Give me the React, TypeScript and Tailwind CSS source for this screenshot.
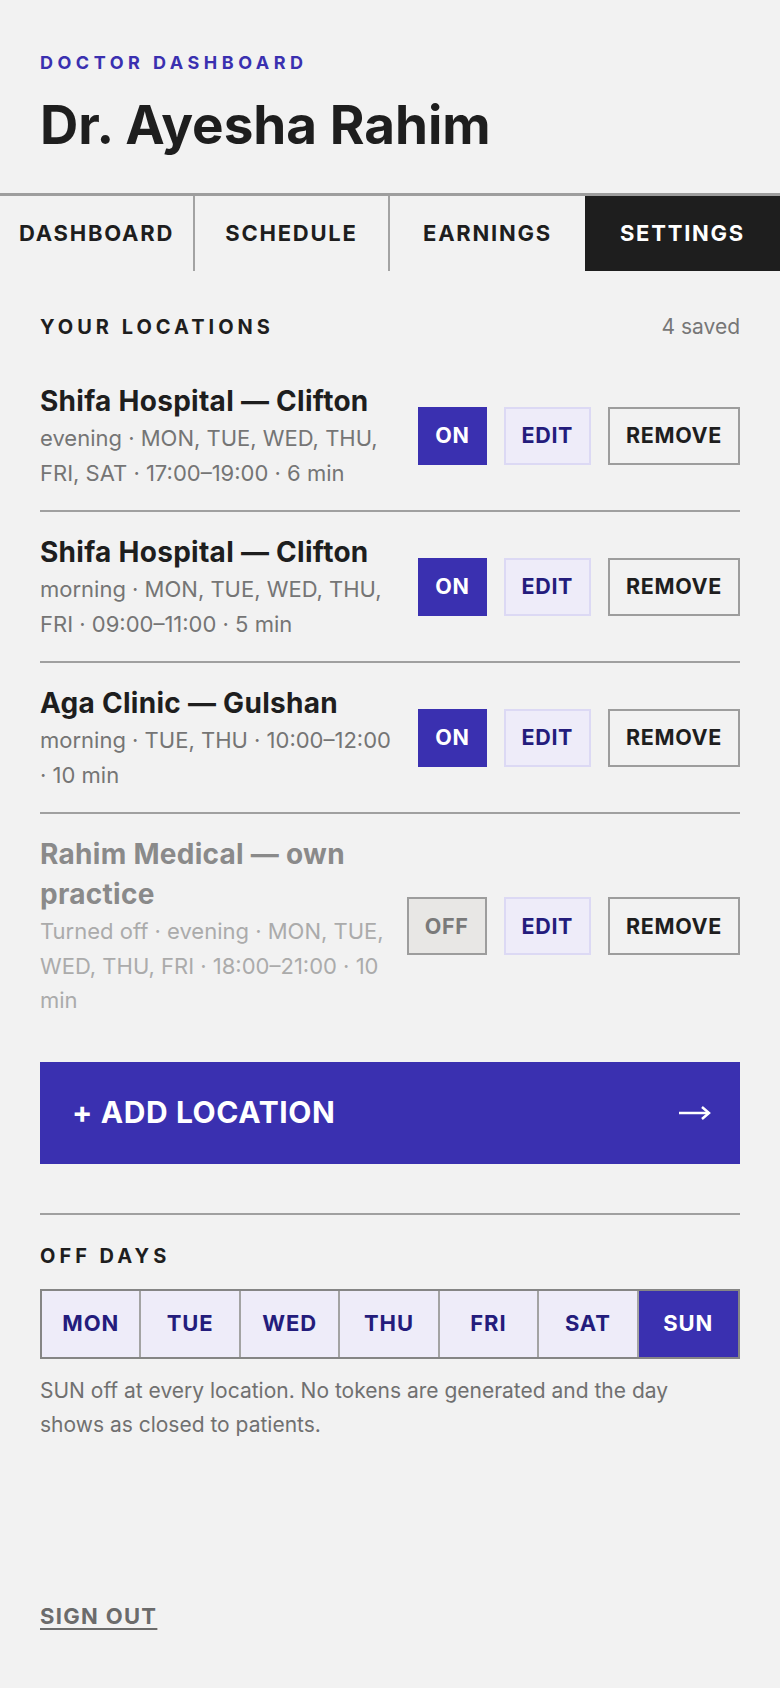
import React, { useState } from 'react';

type Loc = {
  id: number;
  name: string;
  detail: string;
  on: boolean;
};

const LOCATIONS: Loc[] = [
  { id: 1, name: 'Shifa Hospital — Clifton', detail: 'evening · MON, TUE, WED, THU, FRI, SAT · 17:00–19:00 · 6 min', on: true },
  { id: 2, name: 'Shifa Hospital — Clifton', detail: 'morning · MON, TUE, WED, THU, FRI · 09:00–11:00 · 5 min', on: true },
  { id: 3, name: 'Aga Clinic — Gulshan', detail: 'morning · TUE, THU · 10:00–12:00 · 10 min', on: true },
  { id: 4, name: 'Rahim Medical — own practice', detail: 'Turned off · evening · MON, TUE, WED, THU, FRI · 18:00–21:00 · 10 min', on: false },
];

const TABS = ['DASHBOARD', 'SCHEDULE', 'EARNINGS', 'SETTINGS'];
const DAYS = ['MON', 'TUE', 'WED', 'THU', 'FRI', 'SAT', 'SUN'];

export default function App() {
  const [offDays, setOffDays] = useState<string[]>(['SUN']);

  const toggleDay = (d: string) =>
    setOffDays((prev) => (prev.includes(d) ? prev.filter((x) => x !== d) : [...prev, d]));

  return (
    <div
      className="min-h-screen flex flex-col bg-[#f2f2f2] text-[#1e1e1e]"
      style={{ fontFamily: 'Inter, "Liberation Sans", sans-serif' }}
    >
      {/* Header */}
      <header className="px-10 pt-[51px] pb-[40px]">
        <p className="text-[18px] leading-6 font-bold tracking-[0.25em] text-[#3a30b0]">DOCTOR DASHBOARD</p>
        <h1 className="mt-[23px] text-[53px] leading-[55px] font-bold">Dr. Ayesha Rahim</h1>
      </header>

      {/* Tabs */}
      <nav className="grid grid-cols-4 border-t-[3px] border-[#9e9e9e]">
        {TABS.map((t, i) => (
          <div
            key={t}
            className={`h-[75px] flex items-center justify-center text-[22px] font-bold tracking-[0.08em] ${
              t === 'SETTINGS' ? 'bg-[#1e1e1e] text-white' : ''
            } ${i < 2 ? 'border-r-2 border-[#a3a3a3]' : ''}`}
          >
            {t}
          </div>
        ))}
      </nav>

      <main className="px-10">
        {/* Locations */}
        <section className="pt-[44px]">
          <div className="flex items-center justify-between">
            <h2 className="text-[20px] leading-6 font-bold tracking-[0.2em]">YOUR LOCATIONS</h2>
            <span className="text-[21px] leading-6 text-[#777]">4 saved</span>
          </div>

          <div className="mt-[22px]">
            {LOCATIONS.map((loc, i) => (
              <div
                key={loc.id}
                className={`flex items-center gap-5 py-[20px] ${
                  i < LOCATIONS.length - 1 ? 'border-b-2 border-[#a0a0a0]' : ''
                }`}
              >
                <div className="flex-1 min-w-0">
                  <p
                    className={`text-[28px] leading-[40px] font-bold tracking-[0.01em] ${
                      loc.on ? 'text-[#1e1e1e]' : 'text-[#8a8a8a]'
                    }`}
                  >
                    {loc.name}
                  </p>
                  <p className={`text-[22px] leading-[34.5px] ${loc.on ? 'text-[#757575]' : 'text-[#ababab]'}`}>
                    {loc.detail}
                  </p>
                </div>
                <div className="flex items-center gap-[17px] shrink-0">
                  {loc.on ? (
                    <button className="h-[58px] px-[15px] bg-[#3a30b0] border-2 border-[#3a30b0] text-white text-[21.5px] font-bold tracking-[0.03em]">
                      ON
                    </button>
                  ) : (
                    <button className="h-[58px] px-[16px] bg-[#e8e7e5] border-2 border-[#9d9d9d] text-[#7a7a7a] text-[21.5px] font-bold tracking-[0.03em]">
                      OFF
                    </button>
                  )}
                  <button className="h-[58px] px-[16px] bg-[#eeecf9] border-2 border-[#dcd9f4] text-[#241c7c] text-[21.5px] font-bold tracking-[0.03em]">
                    EDIT
                  </button>
                  <button className="h-[58px] px-[16px] border-2 border-[#9d9d9d] text-[#1e1e1e] text-[21.5px] font-bold tracking-[0.03em]">
                    REMOVE
                  </button>
                </div>
              </div>
            ))}
          </div>

          <button className="mt-[24px] w-full h-[102px] bg-[#3a30b0] text-white flex items-center justify-between pl-[32px] pr-[29px]">
            <span className="text-[30px] font-bold tracking-[0.02em]">+ ADD LOCATION</span>
            <svg width="32" height="18" viewBox="0 0 32 18" fill="none" stroke="currentColor" strokeWidth="2.5">
              <path d="M0 9h30" />
              <path d="M23 3l7 6-7 6" />
            </svg>
          </button>
        </section>

        {/* Off days */}
        <section className="mt-[49px] border-t-2 border-[#a0a0a0] pt-[29px]">
          <h2 className="text-[20px] leading-6 font-bold tracking-[0.2em]">OFF DAYS</h2>
          <div className="mt-[21px] grid grid-cols-7 border-2 border-[#858585]">
            {DAYS.map((d, i) => {
              const off = offDays.includes(d);
              return (
                <button
                  key={d}
                  onClick={() => toggleDay(d)}
                  className={`h-[66px] flex items-center justify-center text-[22px] font-bold tracking-[0.04em] ${
                    off ? 'bg-[#3a30b0] text-white' : 'bg-[#eeecf9] text-[#241c7c]'
                  } ${i < DAYS.length - 1 ? 'border-r-2 border-[#a3a3a3]' : ''}`}
                >
                  {d}
                </button>
              );
            })}
          </div>
          <p className="mt-[15px] max-w-[660px] text-[21px] leading-[34px] text-[#707070]">
            SUN off at every location. No tokens are generated and the day shows as closed to patients.
          </p>
        </section>
      </main>

      <footer className="mt-auto px-10 pb-[58px]">
        <a className="text-[22px] leading-6 font-bold tracking-[0.06em] text-[#6b6b6b] underline decoration-2 underline-offset-[4px]">
          SIGN OUT
        </a>
      </footer>
    </div>
  );
}
